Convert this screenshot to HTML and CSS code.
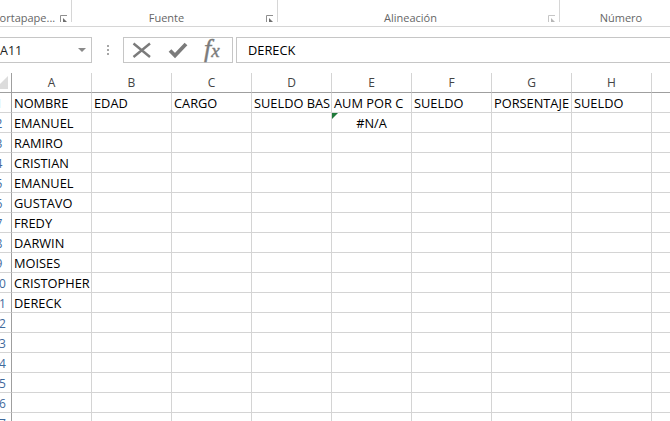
FILE: index.html
```html
<!DOCTYPE html>
<html lang="es">
<head>
    <meta charset="UTF-8">
    <title>Libro1 - Excel</title>
    <link rel="stylesheet" href="styles.css">
</head>
<body>
    <!-- bottom of the ribbon -->
    <div class="ribbon">
        <div class="group group-clip">
            <span class="group-name">Portapape...</span>
            <svg class="launcher" width="7" height="7" viewBox="0 0 7 7"><path d="M0.5 7V0.5H7" stroke="#8f8f8f" fill="none"/><path d="M3 3L7 7H3Z" fill="#6f6f6f"/></svg>
        </div>
        <div class="group group-font">
            <span class="group-name">Fuente</span>
            <svg class="launcher" width="7" height="7" viewBox="0 0 7 7"><path d="M0.5 7V0.5H7" stroke="#8f8f8f" fill="none"/><path d="M3 3L7 7H3Z" fill="#6f6f6f"/></svg>
        </div>
        <div class="group group-align">
            <span class="group-name">Alineación</span>
            <svg class="launcher launcher-off" width="7" height="7" viewBox="0 0 7 7"><path d="M0.5 7V0.5H7" stroke="#8f8f8f" fill="none"/><path d="M3 3L7 7H3Z" fill="#6f6f6f"/></svg>
        </div>
        <div class="group group-num"><span class="group-name">Número</span></div>
    </div>

    <!-- name box and formula bar -->
    <div class="formula-bar">
        <div class="name-box">
            <span>A11</span>
            <svg class="arrow" width="8" height="4" viewBox="0 0 8 4"><path d="M0 0H8L4 4Z" fill="#8a8a8a"/></svg>
        </div>
        <div class="grip"><i></i><i></i><i></i></div>
        <div class="fx-buttons">
            <svg width="20" height="18" viewBox="0 0 20 18"><path d="M1.5 2.5L18 16M18 2.5L1.5 16" stroke="#7b7b7b" stroke-width="2.4" fill="none"/></svg>
            <svg width="22" height="18" viewBox="0 0 22 18"><path d="M4 9.5L9 14.5L20 3" stroke="#7b7b7b" stroke-width="3.8" fill="none"/></svg>
            <span class="fx">f<span class="fx-x">x</span></span>
        </div>
        <div class="formula-input">DERECK</div>
    </div>

    <table class="sheet">
        <colgroup>
            <col class="col-head">
            <col class="col"><col class="col"><col class="col"><col class="col">
            <col class="col"><col class="col"><col class="col"><col class="col">
            <col class="col-rest">
        </colgroup>
        <tr class="head-row">
            <th class="corner"><span class="corner-mark"></span></th>
            <th>A</th><th>B</th><th>C</th><th>D</th><th>E</th><th>F</th><th>G</th><th>H</th><th></th>
        </tr>
        <tr><th class="num"><span>1</span></th><td>NOMBRE</td><td>EDAD</td><td>CARGO</td><td>SUELDO BAS</td><td>AUM POR C</td><td>SUELDO</td><td>PORSENTAJE</td><td>SUELDO</td><td></td></tr>
        <tr><th class="num"><span>2</span></th><td>EMANUEL</td><td></td><td></td><td></td><td class="error"><span class="tick"></span>#N/A</td><td></td><td></td><td></td><td></td></tr>
        <tr><th class="num"><span>3</span></th><td>RAMIRO</td><td></td><td></td><td></td><td></td><td></td><td></td><td></td><td></td></tr>
        <tr><th class="num"><span>4</span></th><td>CRISTIAN</td><td></td><td></td><td></td><td></td><td></td><td></td><td></td><td></td></tr>
        <tr><th class="num"><span>5</span></th><td>EMANUEL</td><td></td><td></td><td></td><td></td><td></td><td></td><td></td><td></td></tr>
        <tr><th class="num"><span>6</span></th><td>GUSTAVO</td><td></td><td></td><td></td><td></td><td></td><td></td><td></td><td></td></tr>
        <tr><th class="num"><span>7</span></th><td>FREDY</td><td></td><td></td><td></td><td></td><td></td><td></td><td></td><td></td></tr>
        <tr><th class="num"><span>8</span></th><td>DARWIN</td><td></td><td></td><td></td><td></td><td></td><td></td><td></td><td></td></tr>
        <tr><th class="num"><span>9</span></th><td>MOISES</td><td></td><td></td><td></td><td></td><td></td><td></td><td></td><td></td></tr>
        <tr><th class="num"><span>10</span></th><td>CRISTOPHER</td><td></td><td></td><td></td><td></td><td></td><td></td><td></td><td></td></tr>
        <tr><th class="num"><span>11</span></th><td>DERECK</td><td></td><td></td><td></td><td></td><td></td><td></td><td></td><td></td></tr>
        <tr><th class="num"><span>12</span></th><td></td><td></td><td></td><td></td><td></td><td></td><td></td><td></td><td></td></tr>
        <tr><th class="num"><span>13</span></th><td></td><td></td><td></td><td></td><td></td><td></td><td></td><td></td><td></td></tr>
        <tr><th class="num"><span>14</span></th><td></td><td></td><td></td><td></td><td></td><td></td><td></td><td></td><td></td></tr>
        <tr><th class="num"><span>15</span></th><td></td><td></td><td></td><td></td><td></td><td></td><td></td><td></td><td></td></tr>
        <tr><th class="num"><span>16</span></th><td></td><td></td><td></td><td></td><td></td><td></td><td></td><td></td><td></td></tr>
        <tr><th class="num"><span>17</span></th><td></td><td></td><td></td><td></td><td></td><td></td><td></td><td></td><td></td></tr>
    </table>
</body>
</html>
```

FILE: styles.css
```css
html, body {
    height: 100%;
}
body {
    margin: 0;
    background-color: #fff;
    font-family: "Open Sans", "Noto Sans", sans-serif;
    font-size: 12px;
    color: #000;
    overflow: hidden;
}

/* ribbon */
.ribbon {
    display: flex;
    height: 26px;
    border-bottom: 1px solid #d6d6d6;
}
.group {
    display: flex;
    flex: none;
    justify-content: center;
    position: relative;
    height: 22px;
    border-right: 1px solid #d6d6d6;
    box-sizing: border-box;
    color: #666;
    font-size: 11px;
}
.group-name {
    margin-top: 11px;
    line-height: 14px;
}
.group-clip {
    justify-content: flex-start;
    margin-left: -9px;
    width: 81px;
    padding-left: 2px;
}
.group-font {
    width: 206px;
    padding-right: 16px;
}
.group-align {
    width: 282px;
    padding-right: 16px;
}
.group-num {
    width: 122px;
    border-right: none;
}
.launcher {
    position: absolute;
    right: 4px;
    bottom: 0;
}
.launcher-off {
    opacity: 0.5;
}

/* formula bar */
.formula-bar {
    display: flex;
    height: 26px;
    margin-top: 10px;
}
.name-box {
    display: flex;
    justify-content: space-between;
    align-items: center;
    width: 93px;
    margin-left: -1px;
    padding-right: 5px;
    border: 1px solid #c6c6c6;
    box-sizing: border-box;
    font-size: 12.5px;
    color: #222;
}
.grip {
    display: flex;
    flex-direction: column;
    justify-content: center;
    gap: 2px;
    width: 31px;
    padding-left: 15px;
    box-sizing: border-box;
}
.grip i {
    width: 2px;
    height: 2px;
    background-color: #a6a6a6;
}
.fx-buttons {
    display: flex;
    align-items: center;
    gap: 14px;
    width: 110px;
    padding-left: 8px;
    border: 1px solid #c6c6c6;
    box-sizing: border-box;
}
.fx {
    margin-left: 2px;
    font-family: "Liberation Serif", serif;
    font-style: italic;
    font-size: 26px;
    line-height: 22px;
    color: #7b7b7b;
    -webkit-text-stroke: 0.4px #7b7b7b;
}
.fx-x {
    font-size: 19px;
}
.formula-input {
    flex: 1;
    margin-left: 3px;
    padding-left: 11px;
    border: 1px solid #c6c6c6;
    border-right: none;
    box-sizing: border-box;
    font-size: 12.8px;
    line-height: 24px;
}

/* sheet */
.sheet {
    margin-top: 10px;
    width: 670px;
    table-layout: fixed;
    border-collapse: separate;
    border-spacing: 0;
}
.col-head {
    width: 12px;
}
.col {
    width: 80px;
}
.col-rest {
    width: 18px;
}
.sheet th,
.sheet td {
    height: 20px;
    padding: 0;
    box-sizing: border-box;
    border-right: 1px solid #d4d4d4;
    border-bottom: 1px solid #d4d4d4;
    overflow: hidden;
    white-space: nowrap;
    font-weight: normal;
    line-height: 17px;
}
.sheet td {
    padding: 2px 0 0 2px;
    font-size: 12.8px;
}
.sheet td:last-child,
.sheet th:last-child {
    border-right: none;
}
.head-row th {
    color: #444;
    border-bottom-color: #9f9f9f;
    font-size: 12px;
}
.sheet .corner {
    position: relative;
    border-right-color: #9f9f9f;
}
.corner-mark {
    position: absolute;
    right: 3px;
    bottom: 3px;
    border-style: solid;
    border-width: 0 0 13px 13px;
    border-color: transparent transparent #dcdcdc transparent;
}
/* the row header is scrolled off, only its right end shows */
.sheet .num {
    color: #3f6a9c;
    font-size: 12px;
    border-right-color: #9f9f9f;
}
.num span {
    display: block;
    width: 24px;
    margin-left: -13px;
    padding-top: 1px;
    text-align: center;
}
.sheet .error {
    position: relative;
    padding-left: 0;
    text-align: center;
}
.tick {
    position: absolute;
    left: 0;
    top: 0;
    border-style: solid;
    border-width: 6px 6px 0 0;
    border-color: #1f7a3a transparent transparent transparent;
}
```
